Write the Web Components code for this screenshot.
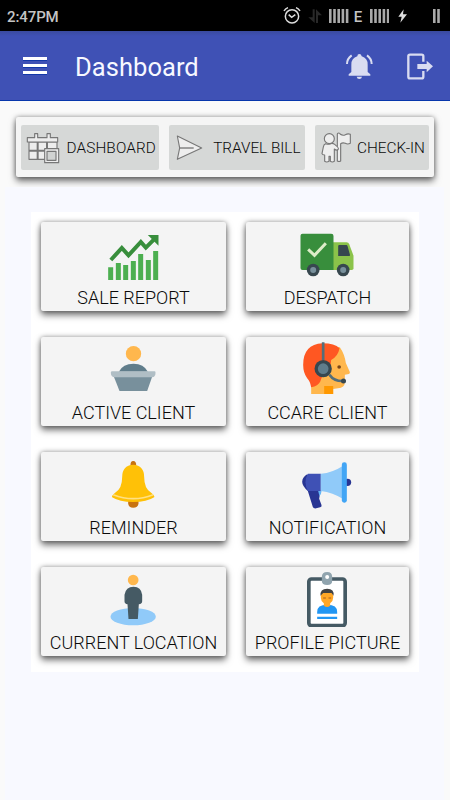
<!DOCTYPE html>
<html lang="en">
<head>
<meta charset="utf-8">
<meta name="viewport" content="width=device-width, initial-scale=1">
<title>Dashboard</title>
<style>
  body {
    margin: 0;
    background: #fafafa;
    font-family: Roboto, "Liberation Sans", sans-serif;
    color: #0a0a0a;
  }
</style>
</head>
<body>
<dashboard-app>
  <status-bar slot="top" time="2:47PM" network="E"></status-bar>
  <app-bar slot="top" heading="Dashboard"></app-bar>
  <quick-bar slot="top">
    <quick-button icon="calendar" style="--spacing: 0.15px">DASHBOARD</quick-button>
    <quick-button icon="send" style="--edge: 4px">TRAVEL BILL</quick-button>
    <quick-button icon="checkin" style="--edge: 4px">CHECK-IN</quick-button>
  </quick-bar>
  <tile-grid>
    <menu-tile icon="chart">SALE REPORT</menu-tile>
    <menu-tile icon="truck">DESPATCH</menu-tile>
    <menu-tile icon="podium">ACTIVE CLIENT</menu-tile>
    <menu-tile icon="support">CCARE CLIENT</menu-tile>
    <menu-tile icon="bell">REMINDER</menu-tile>
    <menu-tile icon="megaphone">NOTIFICATION</menu-tile>
    <menu-tile icon="location">CURRENT LOCATION</menu-tile>
    <menu-tile icon="badge">PROFILE PICTURE</menu-tile>
  </tile-grid>
</dashboard-app>

<script>
// Each icon is [viewBox, markup]; three units make one CSS pixel.
const ICONS = {
  calendar: ["75 75 108 108", `
    <g fill="#ededed" stroke="#777" stroke-width="3.4" stroke-linejoin="round">
      <path d="M87 111h84v52H87z"/>
      <path d="M87 137h84M113 111v52M141 111v52" stroke-width="6"/>
      <path d="M82 98h22V86h9v12h28V86h10v12h22v13H82z"/>
      <path d="M134 131h42v42h-42z"/>
      <path d="M141 139h27v27h-27z" fill="#d1d3d2"/>
    </g>`],
  send: ["522 75 108 108", `
    <path d="M535 93l73 36-73 34 7-34z" fill="#eee" stroke="#777" stroke-width="3.4" stroke-linejoin="round"/>
    <path d="M542 129h42" stroke="#777" stroke-width="4"/>`],
  checkin: ["282 75 108 108", `
    <g fill="#eee" stroke="#777" stroke-width="3.4" stroke-linejoin="round">
      <path d="M337 87q0-3 4-3t5 4q8 5 15 1 8-4 15-1v27q-8 4-15 0-8-3-14 1v52q-5 3-10 0z"/>
      <path d="M302 116q-6 2-7 10l-4 20q1 4 8 4v19q6 4 13 0v-15h4v15q6 4 12 0v-37q9 7 12 0 2-4-11-14-4-3-8-3-9 5-19 1z"/>
      <circle cx="313" cy="101" r="15"/>
    </g>`],
  chart: ["236.5 51 180 180", `
    <path fill="#4caf50" d="M249 187h15v38h-15zM272 174h15v51h-15zM294 180h15v45h-15zM317 168h15v57h-15zM339 147h15v78h-15zM362 165h15v60h-15zM384 138h15v87h-15z"/>
    <path d="M257 165l33-36 20 22 37-40 15 17 27-27" fill="none" stroke="#388e3c" stroke-width="12"/>
    <path fill="#388e3c" d="M368 90h32v32z"/>`],
  truck: ["188.5 51 180 180", `
    <path fill="#8bc34a" d="M293 112h41q6 0 8 5l13 35v38q0 5-5 5h-57z"/>
    <path fill="#388e3c" d="M202 86h86q7 0 7 7v102h-93q-6 0-6-6V92q0-6 6-6z"/>
    <path fill="#37474f" d="M312 120h22q2 0 3 3l7 25v5h-35v-30q0-3 3-3z"/>
    <path d="M219 133l19 18 34-36" fill="none" stroke="#dcedc8" stroke-width="9"/>
    <g fill="#37474f"><circle cx="234" cy="195" r="19"/><circle cx="324" cy="195" r="19"/></g>
    <g fill="#78909c"><circle cx="234" cy="195" r="9"/><circle cx="324" cy="195" r="9"/></g>`],
  podium: ["236.5 36 180 180", `
    <circle cx="325" cy="86" r="23" fill="#ffb74d"/>
    <path fill="#607d8b" d="M281 140q12-24 44-24 31 0 43 24z"/>
    <path fill="#78909c" d="M265 152h117l-16 46h-83z"/>
    <path fill="#b0bec5" d="M261 139h127q3 0 3 4 0 13-10 14H269q-12-1-12-14 0-4 4-4z"/>`],
  support: ["188.5 36 180 180", `
    <path fill="#ffb74d" d="M228 120l26-53 60 0q14 20 18 47l12 27q1 5-3 6l-12 2v22q0 17-21 19l-14 2v15h-66z"/>
    <path fill="#ff9800" d="M267 183h27v24h-27z"/>
    <path fill="#ff5722" d="M228 187q-3-18-12-27-12-17-12-40 0-62 58-65 37 0 51 15-4 24-25 35l-5 43q-23-3-28 22-6 12-27 17z"/>
    <path d="M264 52v54M283 149q13 20 42 19" fill="none" stroke="#546e7a" stroke-width="8"/>
    <circle cx="264" cy="131" r="26" fill="#37474f"/>
    <circle cx="264" cy="131" r="16" fill="#607d8b"/>
    <circle cx="325" cy="168" r="7.5" fill="#37474f"/>
    <circle cx="312" cy="126" r="5.5" fill="#784719"/>`],
  bell: ["236.5 36 180 180", `
    <path fill="#c87310" d="M316 78q-1-15 8-15 10 0 9 15zM309 180h31v11q-2 12-16 12-13 0-15-12z"/>
    <path fill="#ffc107" d="M324 74q-33 2-33 37 0 35-21 47-12 9-9 14 21 14 63 14t63-14q3-5-9-14-21-12-21-47 0-35-33-37z"/>
    <path d="M264 164q60 24 120 0" fill="none" stroke="#ffe082" stroke-width="5"/>`],
  megaphone: ["188.5 36 180 180", `
    <ellipse cx="337" cy="127" rx="11" ry="11" fill="#283593"/>
    <path fill="#283593" d="M216 103q-14 8-15 22 0 12 17 28l15 48q2 5 10 4l12-3q6-2 4-7l-7-19 4-24z"/>
    <path fill="#3f51b5" d="M218 101h39v52h-39q-7-13-7-26 0-15 7-26z"/>
    <path fill="#90caf9" d="M257 101q35-3 67-24v100q-31-19-67-24z"/>
    <path fill="#64b5f6" d="M249 153h10q0 8-6 15z"/>
    <rect x="320" y="67" width="15" height="121" rx="7" fill="#42a5f5"/>`],
  location: ["236.5 27 180 180", `
    <ellipse cx="324" cy="176" rx="68" ry="26" fill="#90caf9"/>
    <circle cx="324" cy="66" r="16" fill="#ffb74d"/>
    <path fill="#455a64" d="M298 110q4-24 27-24t26 24v20q0 8-10 9l-3 44h-28l-3-44q-9-1-9-9z"/>`],
  badge: ["188.5 27 180 180", `
    <rect x="221" y="63" width="109" height="140" rx="8" fill="#fff" stroke="#455a64" stroke-width="11"/>
    <path fill="#90a4ae" d="M260 57q0-15 16-15 15 0 15 15v11q0 13-15 13-16 0-16-13z"/>
    <circle cx="276" cy="57" r="6" fill="#fff"/>
    <path fill="#2196f3" d="M246 162q-1-22 30-22t30 22v5h-60zM246 176h60v7h-60z"/>
    <path fill="#ffa726" d="M257 111q5-10 19-11 14 1 18 11v8q0 10-9 17v7q-9 8-19 0v-7q-9-7-9-17z"/>
    <path fill="#424242" d="M256 113q-2-21 20-21t19 21l-6-8-25 0z"/>
    <path d="M264 120h8M280 120h8" stroke="#a65d1c" stroke-width="3"/>`],
};

function iconSvg(name, size) {
  const [viewBox, body] = ICONS[name];
  return `<svg viewBox="${viewBox}" width="${size}" height="${size}" aria-hidden="true">${body}</svg>`;
}

function bars(count) {
  let out = "";
  for (let i = 0; i < count; i++) {
    out += `<rect x="${i * 4.2}" y="0" width="2.6" height="14"/>`;
  }
  return `<svg width="${count * 4.2 - 1.6}" height="14" fill="#aaa">${out}</svg>`;
}

class BaseElement extends HTMLElement {
  constructor() {
    super();
    this.attachShadow({ mode: "open" });
  }

  connectedCallback() {
    this.shadowRoot.innerHTML = this.template();
  }
}

class DashboardApp extends BaseElement {
  template() {
    return `
      <style>
        :host { display: flex; flex-direction: column; height: 800px; overflow: hidden; }
        main {
          flex: 1;
          margin: 10px 6px 0 5px;
          padding: 25px 25px 0 26px;
          background: #f8f9ff;
        }
      </style>
      <slot name="top"></slot>
      <main><slot></slot></main>`;
  }
}

class StatusBar extends BaseElement {
  template() {
    return `
      <style>
        :host {
          box-sizing: border-box;
          display: flex;
          align-items: center;
          height: 31px;
          padding: 0 10px 0 7px;
          background: #000;
          color: #c4c4c4;
          font-size: 15px;
          font-weight: 500;
        }
        .time { flex: 1; padding-top: 2px; letter-spacing: -0.1px; }
        .net { width: 8px; margin: 2px 8px 0 5px; }
        svg { display: block; }
        .alarm { margin-right: 7px; }
        .data { margin-right: 7px; }
        .bolt { margin: 0 26px 0 9px; }
      </style>
      <span class="time">${this.getAttribute("time")}</span>
      <svg class="alarm" width="18" height="18" viewBox="173 20 54 54" fill="none" stroke="#ddd">
        <circle cx="200" cy="48" r="20" stroke-width="4.5"/>
        <path d="M190 43l9 8 11-8" stroke-width="4.5"/>
        <path d="M176 32q4-7 12-10M224 32q-4-7-12-10" stroke-width="4.5"/>
      </svg>
      <svg class="data" width="14" height="16" viewBox="249 23 42 48" fill="#292929">
        <path d="M263 27h6v41l-19-17h13zM273 68V27l18 18h-12v23z"/>
      </svg>
      ${bars(5)}
      <span class="net">${this.getAttribute("network")}</span>
      ${bars(5)}
      <svg class="bolt" width="9" height="14" viewBox="521 27 27 42" fill="#ddd">
        <path d="M538 28l-16 22h10l-4 18 20-25h-12z"/>
      </svg>
      ${bars(2)}`;
  }
}

class AppBar extends BaseElement {
  template() {
    return `
      <style>
        :host {
          box-sizing: border-box;
          display: flex;
          align-items: center;
          height: 70px;
          padding: 2px 16px 0 23px;
          border-bottom: 1px solid #0837ac;
          background: linear-gradient(#3a4a9f, #3f51b5 5px);
          color: #f7f8ff;
        }
        h1 {
          flex: 1;
          margin: 0 0 0 28px;
          padding-top: 1px;
          font-size: 25.5px;
          font-weight: 400;
          letter-spacing: 0.05px;
        }
        svg { display: block; }
        .alerts { margin-right: 34px; }
      </style>
      <svg width="24" height="19" viewBox="0 0 24 19">
        <path d="M0 1h24v3H0zM0 8h24v3H0zM0 15h24v3H0z" fill="#1438a8"/>
        <path d="M0 0h24v3H0zM0 7h24v3H0zM0 14h24v3H0z" fill="#fff"/>
      </svg>
      <h1>${this.getAttribute("heading")}</h1>
      <svg class="alerts" width="27" height="27" viewBox="363 158 81 81" fill="#d9dcf1">
        <path d="M397 168q0-7 6-7t7 7q18 5 18 25v22l8 7v4h-65v-4l8-7v-22q0-20 18-25zM395 229h16q-1 7-8 7t-8-7z"/>
        <path d="M366 191q0-16 14-26M440 191q0-16-14-26" fill="none" stroke="#d9dcf1" stroke-width="6"/>
      </svg>
      <svg width="27" height="27" viewBox="546 158 81 81">
        <path d="M595 184v-16q0-5-5-5h-35q-5 0-5 5v61q0 5 5 5h35q5 0 5-5v-17" fill="none" stroke="#d9dcf1" stroke-width="7"/>
        <path d="M577 191h28v-10l19 17-19 18v-10h-28z" fill="#d9dcf1"/>
      </svg>`;
  }
}

class QuickBar extends BaseElement {
  template() {
    return `
      <style>
        :host {
          box-sizing: border-box;
          display: grid;
          grid-template-columns: 138px 135.5px 114.5px;
          gap: 10px;
          height: 60px;
          margin: 16px 16px 0;
          padding: 8px 5px 7px;
          border-radius: 2px;
          background: #f5f5f5;
          box-shadow: 0 4px 7px rgba(0, 0, 0, 0.55), 0 0 5px rgba(0, 0, 0, 0.35);
        }
      </style>
      <slot></slot>`;
  }
}

class QuickButton extends BaseElement {
  template() {
    return `
      <style>
        :host {
          display: flex;
          align-items: center;
          justify-content: space-between;
          box-sizing: border-box;
          padding: 0 var(--edge, 3px) 0 4px;
          border-radius: 2px;
          background: #d6d8d7;
          font-size: 15.3px;
          font-weight: 350;
          white-space: nowrap;
          letter-spacing: var(--spacing, 0);
        }
        svg { display: block; flex: none; }
        span { padding-top: 1px; }
      </style>
      ${iconSvg(this.getAttribute("icon"), 36)}
      <span><slot></slot></span>`;
  }
}

class TileGrid extends BaseElement {
  template() {
    return `
      <style>
        :host {
          display: grid;
          grid-template-columns: 185px 163px;
          grid-auto-rows: 89px;
          gap: 26px 20px;
          padding: 10px 10px 16px;
          background: #fff;
        }
      </style>
      <slot></slot>`;
  }
}

class MenuTile extends BaseElement {
  template() {
    return `
      <style>
        :host {
          display: flex;
          flex-direction: column;
          align-items: center;
          border-radius: 2px;
          background: #f4f4f4;
          box-shadow: 0 4px 7px rgba(0, 0, 0, 0.55), 0 0 5px rgba(0, 0, 0, 0.35);
          font-size: 18px;
          font-weight: 350;
          line-height: 21px;
          white-space: nowrap;
        }
        svg { display: block; }
        span { margin-top: 5px; }
      </style>
      ${iconSvg(this.getAttribute("icon"), 60)}
      <span><slot></slot></span>`;
  }
}

customElements.define("status-bar", StatusBar);
customElements.define("app-bar", AppBar);
customElements.define("quick-bar", QuickBar);
customElements.define("quick-button", QuickButton);
customElements.define("tile-grid", TileGrid);
customElements.define("menu-tile", MenuTile);
customElements.define("dashboard-app", DashboardApp);
</script>
</body>
</html>
